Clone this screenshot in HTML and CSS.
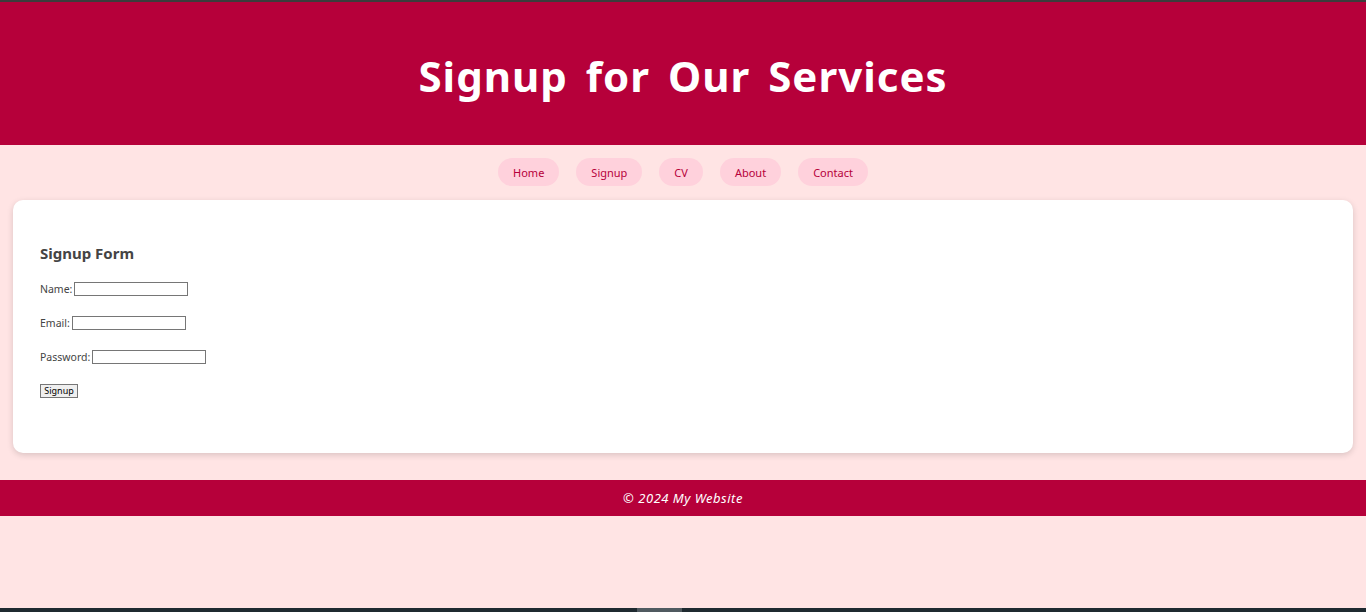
FILE: index.html
```html
<!DOCTYPE html>
<html lang="en">
<head>
<meta charset="utf-8">
<title>Signup for Our Services</title>
<link rel="stylesheet" href="styles.css">
</head>
<body>
<div class="topline"></div>
<header class="site-header">
  <h1 class="title">Signup for Our Services</h1>
</header>
<nav class="nav">
  <a class="pill" href="#">Home</a>
  <a class="pill" href="#">Signup</a>
  <a class="pill" href="#">CV</a>
  <a class="pill" href="#">About</a>
  <a class="pill" href="#">Contact</a>
</nav>
<main class="main">
  <section class="card">
    <h2 class="form-title">Signup Form</h2>
    <form class="form">
      <div class="row"><label>Name:</label> <input class="field" type="text"></div>
      <div class="row"><label>Email:</label> <input class="field" type="email"></div>
      <div class="row"><label>Password:</label> <input class="field" type="password"></div>
      <div class="row"><button class="btn" type="button">Signup</button></div>
    </form>
  </section>
</main>
<footer class="footer">
  <p class="copy">© 2024 My Website</p>
</footer>
<div class="bottombar"><span class="thumb"></span></div>
</body>
</html>
```
FILE: styles.css
```css
* { box-sizing: border-box; }
html, body { margin: 0; padding: 0; }
body {
  background: #ffe4e4;
  font-family: "Comic Sans MS", "Noto Sans", "DejaVu Sans", sans-serif;
  color: #444;
  height: 612px;
}
.topline { height: 2px; background: #3c3c3c; }
.site-header {
  background: #b6003a;
  height: 143px;
  padding-top: 4px;
  display: flex;
  align-items: center;
  justify-content: center;
}
.title {
  margin: 0;
  color: #fff;
  font-size: 42px;
  font-weight: 700;
  letter-spacing: 1px;
  word-spacing: 6px;
}
.nav {
  display: flex;
  justify-content: center;
  gap: 17px;
  padding: 13px 0 14px;
}
.pill {
  display: flex;
  align-items: center;
  justify-content: center;
  height: 28px;
  padding: 0 15px;
  border-radius: 14px;
  background: #ffd1dc;
  color: #b6003a;
  text-decoration: none;
  font-size: 11px;
}
.main { padding: 0 13px; }
.card {
  background: #fff;
  border-radius: 10px;
  box-shadow: 0 2px 6px rgba(0, 0, 0, 0.15);
  height: 253px;
  padding: 43px 27px 0;
}
.form-title {
  margin: 0 0 19px;
  font-size: 15px;
  font-weight: 700;
  color: #444;
  line-height: 20px;
}
.form { display: flex; flex-direction: column; gap: 20px; }
.row {
  display: flex;
  align-items: center;
  gap: 2px;
  font-size: 10.5px;
  height: 14px;
}
.field {
  width: 114px;
  height: 14px;
  border: 1px solid #767676;
  padding: 0;
  margin: 0;
  background: #fff;
}
.btn {
  height: 14px;
  width: 38px;
  padding: 0;
  font-size: 9px;
  font-family: "Noto Sans", sans-serif;
  border: 1px solid #767676;
  background: #efefef;
  color: #000;
  line-height: 12px;
}
.footer {
  margin-top: 27px;
  background: #b6003a;
  height: 36px;
  display: flex;
  align-items: center;
  justify-content: center;
}
.copy {
  margin: 0;
  color: #fff;
  font-style: italic;
  font-size: 13px;
  letter-spacing: 0.5px;
}
.bottombar {
  position: fixed;
  left: 0;
  right: 0;
  bottom: 0;
  height: 4px;
  background: #1f2a30;
}
.thumb {
  position: absolute;
  left: 637px;
  width: 45px;
  top: 0;
  bottom: 0;
  background: #505a60;
}
```
